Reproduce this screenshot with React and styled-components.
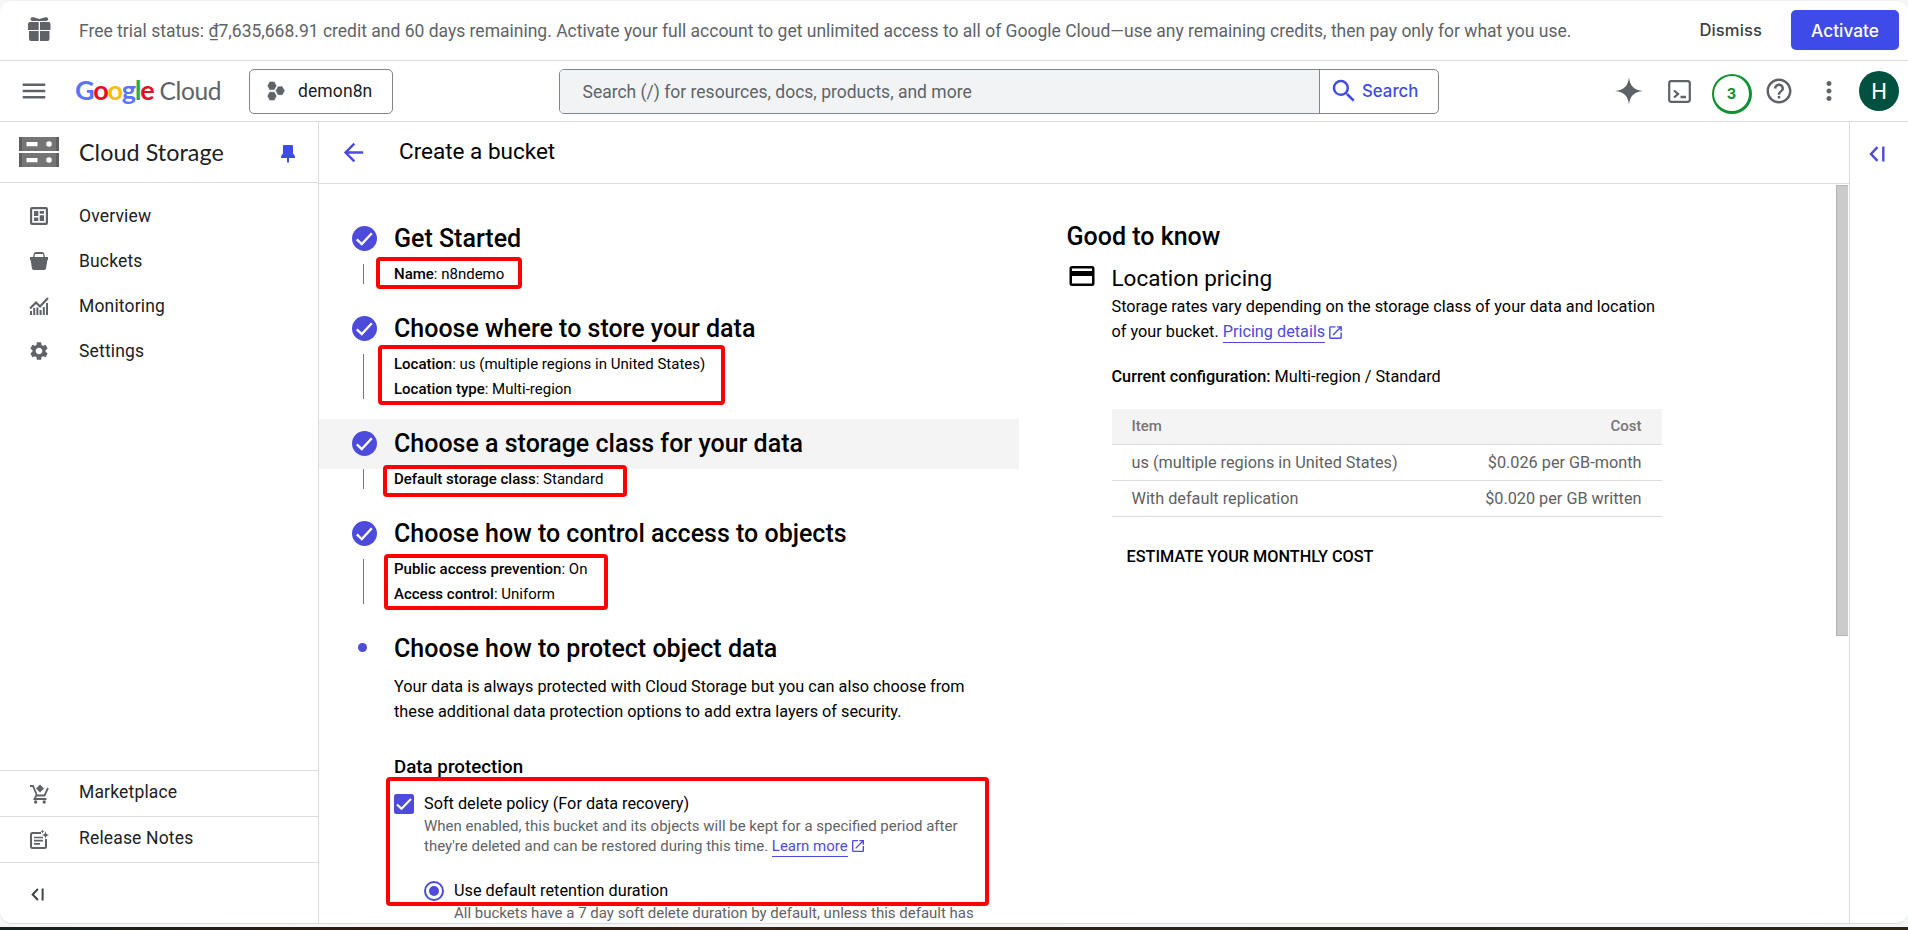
import React from "react";
import styled, { createGlobalStyle } from "styled-components";
import {
  MdMenu,
  MdHelpOutline,
  MdMoreVert,
  MdArrowBack,
  MdSearch,
  MdOpenInNew,
  MdSettings,
} from "react-icons/md";

const ACCENT = "#4d4bdb";
const BLUE = "#3f4be8";
const GREY = "#5f6368";
const LINE = "#dadce0";

const Global = createGlobalStyle`
  * { box-sizing: border-box; }
  body {
    margin: 0;
    background: #f6f6f6;
    color: #000;
    font-family: Roboto, "Liberation Sans", sans-serif;
    font-size: 16.25px;
    overflow: hidden;
  }
  svg { display: block; flex: none; }
`;

const Screen = styled.div`
  height: 930px;
  display: flex;
  flex-direction: column;
  justify-content: space-between;
  position: relative;
`;

const DarkEdge = styled.div`
  height: 3px;
  background: linear-gradient(90deg, #14211f, #2e1a10 20%, #34241a 40%, #24241a 70%, #2b2616);
`;

const Window = styled.div`
  height: 924px;
  background: #fff;
  border-radius: 12px;
  border-bottom: 1px solid #dcdcdc;
  box-shadow: inset 0 1px 0 #f1f1f1;
  overflow: hidden;
  display: flex;
  flex-direction: column;
`;

/* trial banner */
const Banner = styled.div`
  height: 61px;
  flex: none;
  border-bottom: 1px solid ${LINE};
  display: flex;
  align-items: center;
  padding: 0 9px 0 27px;
`;

const BannerText = styled.div`
  flex: 1;
  margin-left: 28px;
  padding-top: 1px;
  font-size: 17.5px;
  white-space: nowrap;
  color: ${GREY};
`;

const DismissButton = styled.button`
  border: 0;
  background: none;
  padding: 0;
  margin-right: 29px;
  font: 500 16.6px Inter, sans-serif;
  letter-spacing: 0.1px;
  color: #3c4043;
`;

const ActivateButton = styled.button`
  width: 108px;
  height: 40px;
  border: 0;
  border-radius: 5px;
  background: ${BLUE};
  color: #fff;
  font: 500 17.3px Inter, sans-serif;
`;

/* top bar */
const TopBar = styled.header`
  height: 61px;
  flex: none;
  border-bottom: 1px solid ${LINE};
  display: flex;
  align-items: center;
  padding: 0 9px 0 19px;
  color: ${GREY};
`;

const Logo = styled.div`
  width: 174px;
  margin-left: 26px;
  padding-bottom: 2px;
  display: flex;
  align-items: baseline;
  font-family: Lato, sans-serif;
  line-height: 30px;
`;

const LogoName = styled.span`
  font-size: 27px;
  font-weight: 700;
  letter-spacing: -1.2px;
`;

const LogoLetter = styled.span`
  color: ${(p) => p.$color};
`;

const LogoProduct = styled.span`
  margin-left: 6px;
  font-size: 24.5px;
  letter-spacing: -0.4px;
  color: ${GREY};
`;

const ProjectButton = styled.button`
  width: 144px;
  height: 45px;
  border: 1px solid #80868b;
  border-radius: 5px;
  background: #fff;
  display: flex;
  align-items: center;
  gap: 10px;
  padding: 0 0 0 14px;
  font: 17.5px Roboto, sans-serif;
  letter-spacing: 0.1px;
  color: #202124;
`;

const SearchBox = styled.div`
  width: 880px;
  height: 45px;
  margin-left: 166px;
  border: 1px solid #80868b;
  border-radius: 5px;
  display: flex;
  overflow: hidden;
`;

const SearchField = styled.div`
  flex: 1;
  padding-left: 22.5px;
  background: #f1f3f4;
  font-size: 17.5px;
  line-height: 44px;
  color: ${GREY};
`;

const SearchButton = styled.div`
  width: 119px;
  border-left: 1px solid #80868b;
  display: flex;
  align-items: center;
  padding-left: 9px;
  gap: 3px;
  color: ${BLUE};
  font: 500 16.8px Inter, sans-serif;
`;

const Tools = styled.div`
  margin-left: auto;
  display: flex;
  align-items: center;
`;

const Notice = styled.div`
  width: 40px;
  height: 40px;
  margin: 6px 12px 0 21px;
  border: 2px solid #0d9231;
  border-right-width: 3px;
  border-bottom-width: 3px;
  border-radius: 50%;
  display: grid;
  place-items: center;
  color: #0d9231;
  font: 700 14.5px Inter, sans-serif;
`;

const Avatar = styled.div`
  width: 40px;
  height: 40px;
  margin-left: 15px;
  border-radius: 50%;
  background: #00513f;
  color: #fff;
  display: grid;
  place-items: center;
  font-size: 22px;
`;

/* body */
const Body = styled.div`
  flex: 1;
  min-height: 0;
  display: flex;
`;

const Sidebar = styled.nav`
  width: 319px;
  flex: none;
  border-right: 1px solid ${LINE};
  display: flex;
  flex-direction: column;
`;

const ProductHeader = styled.div`
  height: 61px;
  border-bottom: 1px solid ${LINE};
  display: flex;
  align-items: center;
  padding: 0 23px 0 19px;
`;

const ProductName = styled.div`
  flex: 1;
  margin-left: 20px;
  padding-bottom: 1px;
  font: 23.3px Lato, sans-serif;
  letter-spacing: 0.06px;
  color: #202124;
`;

const PinSlot = styled.span`
  padding-top: 4px;
`;

const NavList = styled.div`
  flex: 1;
  padding-top: 10px;
`;

const NavItem = styled.a`
  height: 45px;
  display: flex;
  align-items: center;
  gap: 28px;
  padding-left: 27px;
  font-size: 17.5px;
  letter-spacing: 0.16px;
  color: #202124;
`;

const FooterItem = styled(NavItem)`
  height: 46px;
  border-top: 1px solid ${LINE};
`;

const FooterLabel = styled.span`
  padding-bottom: 4px;
`;

const CollapseRow = styled.div`
  height: 61px;
  border-top: 1px solid ${LINE};
  display: flex;
  align-items: center;
  padding: 3px 0 0 31px;
  color: #3c4043;
`;

const Main = styled.main`
  flex: 1;
  min-width: 0;
  display: flex;
  flex-direction: column;
`;

const PageHeader = styled.div`
  height: 62px;
  flex: none;
  border-bottom: 1px solid ${LINE};
  display: flex;
  align-items: center;
  gap: 31px;
  padding-left: 20px;
  color: ${ACCENT};
`;

const PageTitle = styled.h1`
  margin: 0;
  padding-bottom: 4px;
  font-size: 22.5px;
  font-weight: 400;
  color: #000;
`;

const Scroller = styled.div`
  flex: 1;
  min-height: 0;
  overflow: hidden;
  display: flex;
`;

const ScrollThumb = styled.div`
  width: 12px;
  height: 451px;
  margin: 1px 1px 0 auto;
  background: #cbcbcb;
  box-shadow: inset 1px 1px 0 #b3b3b3, inset 0 -1px 0 #b3b3b3;
`;

const SidePanel = styled.aside`
  width: 59px;
  border-left: 1px solid ${LINE};
  padding: 24px 0 0 19px;
`;

/* wizard */
const Steps = styled.div`
  width: 700px;
  flex: none;
  padding-top: 30px;
`;

const StepHeader = styled.div`
  height: 50px;
  display: flex;
  align-items: center;
  padding-bottom: 2px;
  background: ${(p) => (p.$hovered ? "#f4f4f4" : "transparent")};
`;

const StepMark = styled.div`
  width: 75px;
  display: flex;
  padding-left: 33px;
`;

const CurrentDot = styled.div`
  width: 9px;
  height: 9px;
  margin: 0 0 2px 6px;
  border-radius: 50%;
  background: ${ACCENT};
`;

const StepTitle = styled.h2`
  margin: 0;
  font-size: 25px;
  font-weight: 500;
`;

const StepSummary = styled.div`
  margin: 0 0 20px 44px;
  height: ${(p) => p.$lines * 25 - 5}px;
  border-left: 1px solid #757575;
  padding-left: 30px;
  font-size: 15px;
  line-height: 25px;
`;

const SummaryLine = styled.div`
  position: relative;
  top: -2.5px;
`;

const Strong = styled.b`
  font-weight: 500;
`;

const StepContent = styled.div`
  width: 610px;
  margin-left: 75px;
  line-height: 25px;
`;

const Section = styled.h3`
  margin: 31px 0 14px;
  font-size: 18.75px;
  font-weight: 500;
  line-height: 25px;
`;

const Option = styled.div`
  display: flex;
  gap: 10px;
  line-height: 20px;
  margin-top: ${(p) => p.$top || 0}px;
`;

const OptionText = styled.div`
  white-space: nowrap;
`;

const Hint = styled.div`
  margin-top: 2px;
  font-size: 15px;
  line-height: 20px;
  color: ${GREY};
`;

const Checkbox = styled.div`
  width: 20px;
  height: 20px;
  border-radius: 2.5px;
  background: ${ACCENT};
`;

const Radio = styled.div`
  width: 20px;
  height: 20px;
  border: 2.5px solid ${ACCENT};
  border-radius: 50%;
  display: grid;
  place-items: center;
  &::after {
    content: "";
    width: 10px;
    height: 10px;
    border-radius: 50%;
    background: ${ACCENT};
  }
`;

const Link = styled.a`
  display: inline-flex;
  align-items: center;
  gap: 2px;
  color: ${ACCENT};
`;

const LinkText = styled.span`
  line-height: 20px;
  box-shadow: 0 1px 0 ${ACCENT};
`;

/* right column */
const Info = styled.div`
  width: 596px;
  flex: none;
  margin-left: 47.5px;
  padding-top: 38px;
`;

const InfoTitle = styled.h2`
  margin: 0 0 11px;
  font-size: 25px;
  font-weight: 500;
  line-height: 30px;
`;

const InfoRow = styled.div`
  display: flex;
  gap: 17px;
  padding-left: 2px;
`;

const InfoBody = styled.div`
  flex: 1;
  line-height: 25px;
`;

const InfoHeading = styled.h3`
  margin: 0;
  font-size: 22.5px;
  font-weight: 400;
  line-height: 31px;
`;

const Paragraph = styled.p`
  margin: 0 0 20px;
  white-space: nowrap;
`;

const PriceTable = styled.div`
  width: 550px;
`;

const PriceRow = styled.div`
  height: 36px;
  display: flex;
  align-items: center;
  justify-content: space-between;
  padding: 0 20px;
  border-bottom: 1px solid #dcdcdc;
  background: ${(p) => (p.$head ? "#f4f4f4" : "#fff")};
  color: ${(p) => (p.$head ? "#757575" : "#616161")};
  font-size: ${(p) => (p.$head ? 15 : 16.25)}px;
  font-weight: ${(p) => (p.$head ? 500 : 400)};
`;

const EstimateButton = styled.div`
  margin: 27px 0 0 15px;
  font-weight: 500;
`;

/* red marker frames drawn over the page */
const Marker = styled.div`
  position: absolute;
  left: ${(p) => p.$x}px;
  top: ${(p) => p.$y}px;
  width: ${(p) => p.$w}px;
  height: ${(p) => p.$h}px;
  border: 4px solid #ff0000;
  border-radius: 4px;
`;

const Svg = ({ w = 24, h = w, box, children, fill = "currentColor" }) => (
  <svg width={w} height={h} viewBox={box || `0 0 ${w} ${h}`} fill={fill}>
    {children}
  </svg>
);

const GiftIcon = () => (
  <Svg w={25} h={26} box="0 0 25 26">
    <path d="M3.500 2.200C3.300.6 5.200-.2 6.600.3L12.300 2.100 18.300.3C19.800-.1 21.500.7 21.100 2.200 21 3.300 20 4 18.800 4H5.800C4.600 4 3.600 3.300 3.500 2.200Z" />
    <path d="M3 5h8.700v8H1V7a2 2 0 0 1 2-2ZM13 5h8.500a2 2 0 0 1 2 2v6H13ZM2 14h9.700v10H4a2 2 0 0 1-2-2ZM13 14h9.500v8a2 2 0 0 1-2 2H13Z" />
  </Svg>
);

const ProjectIcon = () => (
  <Svg w={18} h={20}>
    <path d="M2.800 1h4.400L9.200 4.800 7.200 8.600H2.800L.8 4.800Z" strokeLinejoin="round" stroke="currentColor" strokeWidth=".6" />
    <path d="M2.800 11.200h4.400l2 3.900-2 3.900H2.800l-2-3.900Z" strokeLinejoin="round" stroke="currentColor" strokeWidth=".6" />
    <path d="M11.200 5.700h4l2.200 4-2.200 4h-4l-2.200-4Z" strokeLinejoin="round" stroke="currentColor" strokeWidth=".6" />
  </Svg>
);

const SparkIcon = () => (
  <Svg w={28}>
    <path d="M14 0C14.800 9 19 13.200 28 14 19 14.800 14.800 19 14 28 13.200 19 9 14.800 0 14 9 13.200 13.200 9 14 0Z" />
    <path d="M14 4C15 10 18 13 24 14 18 15 15 18 14 24 13 18 10 15 4 14 10 13 13 10 14 4Z" />
  </Svg>
);

const TerminalIcon = () => (
  <Svg w={23} fill="none">
    <rect x="1.200" y="1.200" width="20.600" height="20.600" rx="2" stroke="currentColor" strokeWidth="2.200" />
    <path d="M6 10.500 10 14 6 17.500M12.500 17h5.500" stroke="currentColor" strokeWidth="2.300" />
  </Svg>
);

const StorageIcon = () => (
  <Svg w={40} h={30}>
    <path fill="#757575" d="M0 0h40v14H0zM0 16h40v14H0z" />
    <path fill="#5f5f5f" d="M37 0h3v14h-3zM37 16h3v14h-3zM0 0h3v14H0zM0 16h3v14H0z" />
    <path fill="#fff" d="M7.500 5h11v4.200h-11zM7.500 21h11v4.200h-11z" />
    <circle cx="30" cy="7" r="2.800" fill="#fff" />
    <circle cx="30" cy="23" r="2.800" fill="#fff" />
  </Svg>
);

const PinIcon = () => (
  <Svg w={14} h={18} fill={BLUE}>
    <path d="M2 1a1 1 0 0 1 1-1h8a1 1 0 0 1 1 1v7.500L14 11v2H8v4l-1 1-1-1v-4H0v-2l2-2.500Z" />
  </Svg>
);

const OverviewIcon = () => (
  <Svg>
    <path
      fillRule="evenodd"
      d="M5 3h14a2 2 0 0 1 2 2v14a2 2 0 0 1-2 2H5a2 2 0 0 1-2-2V5a2 2 0 0 1 2-2Zm.2 2.200v13.600h13.600V5.200ZM7 7h4.300v5H7Zm5.700 0H17v2.700h-4.300Zm0 4.200H17V17h-4.300ZM7 13.600h4.300V17H7Z"
    />
  </Svg>
);

const BucketIcon = () => (
  <Svg>
    <path fillRule="evenodd" d="M3 8h3l.8-3.200A2.300 2.300 0 0 1 9 3h6a2.300 2.300 0 0 1 2.200 1.800L18 8h3v3h-.6l-1.400 8.500A1.800 1.800 0 0 1 17.300 21H6.700A1.800 1.800 0 0 1 5 19.500L3.600 11H3Zm5-3-.6 3h9.200L16 5Z" />
  </Svg>
);

const MonitoringIcon = () => (
  <Svg fill="none">
    <path d="M3 14.500 9 8.500l4 4L21 4" stroke="currentColor" strokeWidth="2.200" />
    <path d="M4 21v-4M7.200 21v-7M10.400 21v-7.500M13.600 21v-5M16.800 21v-8M20 21V9" stroke="currentColor" strokeWidth="2" />
  </Svg>
);

const MarketIcon = () => (
  <Svg fill="none">
    <path d="M3 4h3l4 9.500h7.500L21 6M9.500 13l-2 4h12" stroke="currentColor" strokeWidth="1.800" />
    <path d="m13 2.500 4 4-4 4-4-4Z" fill="currentColor" />
    <circle cx="8.700" cy="20" r="1.700" fill="currentColor" />
    <circle cx="17.200" cy="20" r="1.700" fill="currentColor" />
  </Svg>
);

const NotesIcon = () => (
  <Svg fill="none">
    <path d="M14 5H5.500A1.500 1.500 0 0 0 4 6.500v12A1.500 1.500 0 0 0 5.500 20h12a1.500 1.500 0 0 0 1.500-1.500V11" stroke="currentColor" strokeWidth="2" />
    <path d="M7 9.500h9M7 12.700h9M7 15.900h6" stroke="currentColor" strokeWidth="1.700" />
    <path d="m18.500 3.500 1 2.500 2.500 1-2.500 1-1 2.500-1-2.500-2.500-1 2.500-1ZM15.500 1.500l.6 1.400 1.400.6-1.400.6-.6 1.400-.6-1.400-1.400-.6 1.400-.6Z" fill="currentColor" />
  </Svg>
);

const CollapseIcon = ({ w, h }) => (
  <Svg w={w} h={h} box="0 0 16 16" fill="none">
    <path d="M8.500 1.200 2 8l6.500 6.800M14.300.5v15" stroke="currentColor" strokeWidth="2.400" />
  </Svg>
);

const CheckCircle = () => (
  <Svg w={25} fill="none">
    <circle cx="12.500" cy="12.500" r="12.500" fill={ACCENT} />
    <path d="m4.800 13.300 5 4.700 10-10.800" stroke="#fff" strokeWidth="2.300" />
  </Svg>
);

const Tick = () => (
  <Svg w={20} fill="none">
    <path d="m3 10.500 4.500 4.300L17 5" stroke="#fff" strokeWidth="2.200" />
  </Svg>
);

const CardIcon = () => (
  <Svg w={26} h={31} box="0 0 26 31">
    <path fillRule="evenodd" d="M3 3h20a2.500 2.500 0 0 1 2.500 2.500v15A2.500 2.500 0 0 1 23 23H3A2.500 2.500 0 0 1 .5 20.500v-15A2.500 2.500 0 0 1 3 3Zm0 2.500V8h20V5.500Zm0 7.500v7.500h20V13Z" />
  </Svg>
);

const LOGO = [
  ["G", "#5b74ff"],
  ["o", "#ea0b1c"],
  ["o", "#fbbc04"],
  ["g", "#5b74ff"],
  ["l", "#12b45a"],
  ["e", "#ea0b1c"],
];

const NAV = [
  ["Overview", <OverviewIcon />],
  ["Buckets", <BucketIcon />],
  ["Monitoring", <MonitoringIcon />],
  ["Settings", <MdSettings size={22} />],
];

const STEPS = [
  { title: "Get Started", rows: [["Name", "n8ndemo"]] },
  {
    title: "Choose where to store your data",
    rows: [
      ["Location", "us (multiple regions in United States)"],
      ["Location type", "Multi-region"],
    ],
  },
  { title: "Choose a storage class for your data", hovered: true, rows: [["Default storage class", "Standard"]] },
  {
    title: "Choose how to control access to objects",
    rows: [
      ["Public access prevention", "On"],
      ["Access control", "Uniform"],
    ],
  },
];

const MARKERS = [
  [376, 257, 146, 32],
  [378, 345, 347, 60],
  [383, 465, 244, 32],
  [384, 554, 224, 56],
  [386, 777, 603, 129],
];

const NavIconSlot = styled.span`
  width: 24px;
  display: flex;
  justify-content: center;
  color: ${GREY};
`;

const HelpSlot = styled.span`
  margin-right: 20px;
`;

const TerminalSlot = styled.span`
  margin-left: 25px;
`;

export default function App() {
  return (
    <Screen>
      <Global />
      <Window>
        <Banner>
          <NavIconSlot>
            <GiftIcon />
          </NavIconSlot>
          <BannerText>
            Free trial status: ₫7,635,668.91 credit and 60 days remaining. Activate your full account to get unlimited
            access to all of Google Cloud—use any remaining credits, then pay only for what you use.
          </BannerText>
          <DismissButton>Dismiss</DismissButton>
          <ActivateButton>Activate</ActivateButton>
        </Banner>

        <TopBar>
          <MdMenu size={30} />
          <Logo>
            <LogoName>
              {LOGO.map(([ch, color], i) => (
                <LogoLetter key={i} $color={color}>
                  {ch}
                </LogoLetter>
              ))}
            </LogoName>
            <LogoProduct>Cloud</LogoProduct>
          </Logo>
          <ProjectButton>
            <NavIconSlot>
              <ProjectIcon />
            </NavIconSlot>
            demon8n
          </ProjectButton>
          <SearchBox>
            <SearchField>Search (/) for resources, docs, products, and more</SearchField>
            <SearchButton>
              <MdSearch size={30} />
              Search
            </SearchButton>
          </SearchBox>
          <Tools>
            <SparkIcon />
            <TerminalSlot>
              <TerminalIcon />
            </TerminalSlot>
            <Notice>3</Notice>
            <HelpSlot>
              <MdHelpOutline size={30} />
            </HelpSlot>
            <MdMoreVert size={30} />
            <Avatar>H</Avatar>
          </Tools>
        </TopBar>

        <Body>
          <Sidebar>
            <ProductHeader>
              <StorageIcon />
              <ProductName>Cloud Storage</ProductName>
              <PinSlot>
                <PinIcon />
              </PinSlot>
            </ProductHeader>
            <NavList>
              {NAV.map(([label, icon]) => (
                <NavItem key={label}>
                  <NavIconSlot>{icon}</NavIconSlot>
                  {label}
                </NavItem>
              ))}
            </NavList>
            <FooterItem>
              <NavIconSlot>
                <MarketIcon />
              </NavIconSlot>
              <FooterLabel>Marketplace</FooterLabel>
            </FooterItem>
            <FooterItem>
              <NavIconSlot>
                <NotesIcon />
              </NavIconSlot>
              <FooterLabel>Release Notes</FooterLabel>
            </FooterItem>
            <CollapseRow>
              <CollapseIcon w={13} h={13} />
            </CollapseRow>
          </Sidebar>

          <Main>
            <PageHeader>
              <MdArrowBack size={29} />
              <PageTitle>Create a bucket</PageTitle>
            </PageHeader>
            <Scroller>
              <Steps>
                {STEPS.map((s) => (
                  <React.Fragment key={s.title}>
                    <StepHeader $hovered={s.hovered}>
                      <StepMark>
                        <CheckCircle />
                      </StepMark>
                      <StepTitle>{s.title}</StepTitle>
                    </StepHeader>
                    <StepSummary $lines={s.rows.length}>
                      {s.rows.map(([k, v]) => (
                        <SummaryLine key={k}>
                          <Strong>{k}</Strong>: {v}
                        </SummaryLine>
                      ))}
                    </StepSummary>
                  </React.Fragment>
                ))}
                <StepHeader>
                  <StepMark>
                    <CurrentDot />
                  </StepMark>
                  <StepTitle>Choose how to protect object data</StepTitle>
                </StepHeader>
                <StepContent>
                  Your data is always protected with Cloud Storage but you can also choose from
                  <br />
                  these additional data protection options to add extra layers of security.
                  <Section>Data protection</Section>
                  <Option>
                    <Checkbox>
                      <Tick />
                    </Checkbox>
                    <OptionText>
                      Soft delete policy (For data recovery)
                      <Hint>
                        When enabled, this bucket and its objects will be kept for a specified period after
                        <br />
                        they're deleted and can be restored during this time.{" "}
                        <Link>
                          <LinkText>Learn more</LinkText>
                          <MdOpenInNew size={16} />
                        </Link>
                      </Hint>
                      <Option $top={25}>
                        <Radio />
                        <OptionText>
                          Use default retention duration
                          <Hint>All buckets have a 7 day soft delete duration by default, unless this default has</Hint>
                        </OptionText>
                      </Option>
                    </OptionText>
                  </Option>
                </StepContent>
              </Steps>

              <Info>
                <InfoTitle>Good to know</InfoTitle>
                <InfoRow>
                  <CardIcon />
                  <InfoBody>
                    <InfoHeading>Location pricing</InfoHeading>
                    <Paragraph>
                      Storage rates vary depending on the storage class of your data and location
                      <br />
                      of your bucket.{" "}
                      <Link>
                        <LinkText>Pricing details</LinkText>
                        <MdOpenInNew size={17} />
                      </Link>
                    </Paragraph>
                    <Paragraph>
                      <Strong>Current configuration:</Strong> Multi-region / Standard
                    </Paragraph>
                    <PriceTable>
                      <PriceRow $head>
                        <span>Item</span>
                        <span>Cost</span>
                      </PriceRow>
                      <PriceRow>
                        <span>us (multiple regions in United States)</span>
                        <span>$0.026 per GB-month</span>
                      </PriceRow>
                      <PriceRow>
                        <span>With default replication</span>
                        <span>$0.020 per GB written</span>
                      </PriceRow>
                    </PriceTable>
                    <EstimateButton>ESTIMATE YOUR MONTHLY COST</EstimateButton>
                  </InfoBody>
                </InfoRow>
              </Info>
              <ScrollThumb />
            </Scroller>
          </Main>

          <SidePanel>
            <Link>
              <CollapseIcon w={16} h={16} />
            </Link>
          </SidePanel>
        </Body>
      </Window>
      <DarkEdge />
      {MARKERS.map(([x, y, w, h]) => (
        <Marker key={y} $x={x} $y={y} $w={w} $h={h} />
      ))}
    </Screen>
  );
}
